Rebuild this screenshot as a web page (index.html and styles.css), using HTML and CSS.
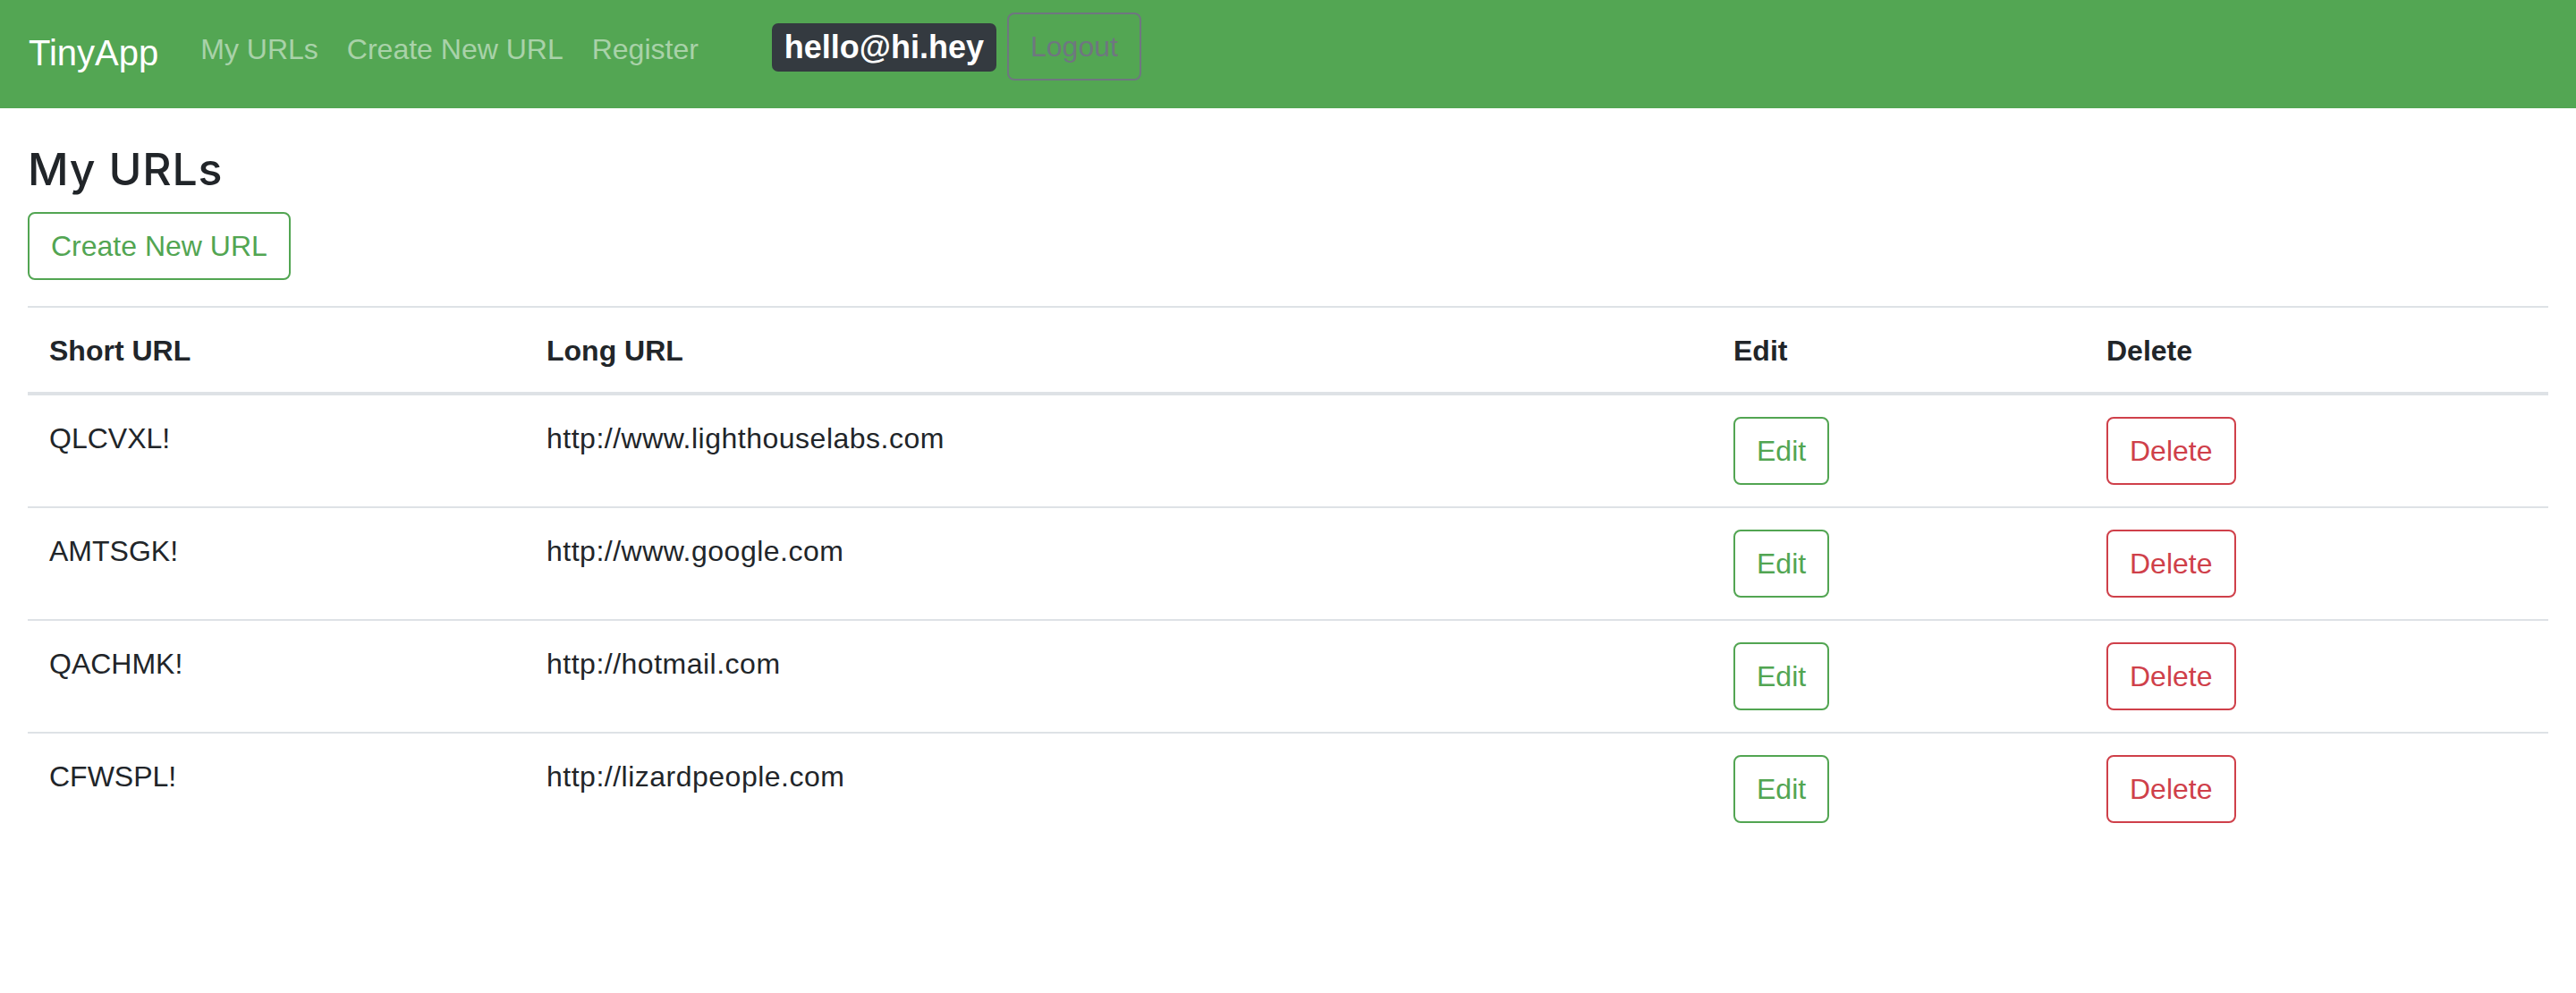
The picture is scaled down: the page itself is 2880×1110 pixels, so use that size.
FILE: index.html
```html
<!DOCTYPE html>
<html lang="en">
<head>
<meta charset="utf-8">
<title>TinyApp</title>
<link rel="stylesheet" href="styles.css">
</head>
<body>
<nav class="navbar">
  <a class="brand" href="#">TinyApp</a>
  <div class="nav-links">
    <a class="nav-link" href="#">My URLs</a>
    <a class="nav-link" href="#">Create New URL</a>
    <a class="nav-link" href="#">Register</a>
  </div>
  <div class="user">
    <span class="badge">hello@hi.hey</span>
    <button class="btn btn-logout">Logout</button>
  </div>
</nav>
<main class="container">
  <h3 class="title">My URLs</h3>
  <a class="btn btn-green" href="#">Create New URL</a>
  <table class="table">
    <colgroup>
      <col class="c1"><col class="c2"><col class="c3"><col class="c4">
    </colgroup>
    <thead>
      <tr><th>Short URL</th><th>Long URL</th><th>Edit</th><th>Delete</th></tr>
    </thead>
    <tbody>
      <tr><td>QLCVXL!</td><td class="url">http://www.lighthouselabs.com</td><td><a class="btn btn-green" href="#">Edit</a></td><td><button class="btn btn-red">Delete</button></td></tr>
      <tr><td>AMTSGK!</td><td class="url">http://www.google.com</td><td><a class="btn btn-green" href="#">Edit</a></td><td><button class="btn btn-red">Delete</button></td></tr>
      <tr><td>QACHMK!</td><td class="url">http://hotmail.com</td><td><a class="btn btn-green" href="#">Edit</a></td><td><button class="btn btn-red">Delete</button></td></tr>
      <tr><td>CFWSPL!</td><td class="url">http://lizardpeople.com</td><td><a class="btn btn-green" href="#">Edit</a></td><td><button class="btn btn-red">Delete</button></td></tr>
    </tbody>
  </table>
</main>
</body>
</html>
```
FILE: styles.css
```css
* { box-sizing: border-box; }
html, body {
  margin: 0;
  padding: 0;
  background: #ffffff;
  color: #212529;
  font-family: "Liberation Sans", Arial, sans-serif;
  font-size: 32px;
  line-height: 48px;
}
a { text-decoration: none; }

.navbar {
  display: flex;
  align-items: flex-start;
  height: 121px;
  padding: 0 32px;
  background: #53a653;
}
.brand {
  margin-top: 29px;
  margin-right: 31px;
  font-size: 40px;
  line-height: 60px;
  color: #ffffff;
}
.nav-links {
  display: flex;
  margin-top: 31px;
}
.nav-link {
  padding: 0 16px;
  color: rgba(255, 255, 255, 0.5);
  font-size: 32px;
  line-height: 48px;
}
.user {
  display: flex;
  align-items: flex-start;
  margin-left: 66px;
}
.badge {
  margin-top: 26px;
  padding: 9px 14px;
  background: #343a40;
  color: #ffffff;
  font-weight: bold;
  font-size: 36px;
  line-height: 36px;
  border-radius: 7px;
}
.btn {
  display: inline-block;
  padding: 12px 24px;
  border: 2px solid transparent;
  border-radius: 8px;
  background: transparent;
  font-family: "Liberation Sans", Arial, sans-serif;
  font-size: 32px;
  line-height: 48px;
  cursor: pointer;
}
.btn-logout {
  margin-top: 14px;
  margin-left: 12px;
  border-color: #6f7680;
  color: #6f7680;
}
.btn-green {
  border-color: #52a552;
  color: #52a552;
}
.btn-red {
  border-color: #cf404a;
  color: #cf404a;
}

.container {
  padding: 40px 31px 0;
}
.title {
  margin: 0 0 18px;
  font-family: Inter, "Liberation Sans", sans-serif;
  font-weight: 500;
  font-size: 50px;
  line-height: 57.6px;
  letter-spacing: 0.8px;
  color: #212529;
}
.table {
  width: 100%;
  margin-top: 29px;
  border-collapse: collapse;
  table-layout: fixed;
}
.c1 { width: 556px; }
.c2 { width: 1327px; }
.c3 { width: 417px; }
.c4 { width: 518px; }
.table th,
.table td {
  padding: 24px;
  text-align: left;
  vertical-align: top;
  border-top: 2px solid #dee2e6;
}
.table th {
  font-weight: bold;
  padding-bottom: 22px;
  border-bottom: 4px solid #dee2e6;
}
.table td.url {
  letter-spacing: 0.5px;
}
```
